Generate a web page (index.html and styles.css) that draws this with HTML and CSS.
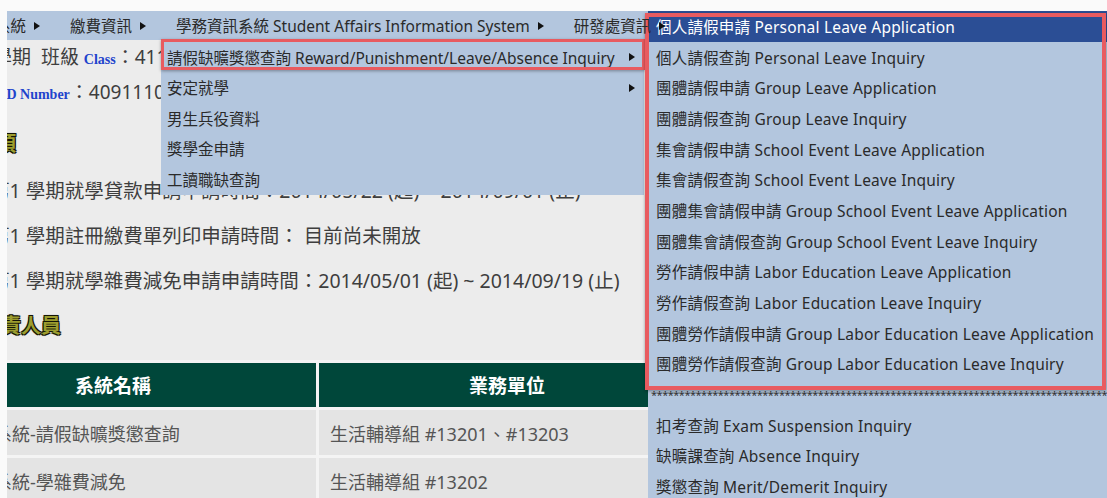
FILE: index.html
```html
<!DOCTYPE html>
<html lang="zh-Hant">
<head>
<meta charset="utf-8">
<title>學生資訊系統</title>
<link rel="stylesheet" href="styles.css">
</head>
<body>
<div class="page">
  <nav class="menubar">
    <div class="menu-item first"><span>學務系統</span><i class="tri"></i></div>
    <div class="menu-item"><span>繳費資訊</span><i class="tri"></i></div>
    <div class="menu-item open">
      <span>學務資訊系統 Student Affairs Information System</span><i class="tri"></i>
      <ul class="submenu">
        <li class="sub-item current">
          <span>請假缺曠獎懲查詢 Reward/Punishment/Leave/Absence Inquiry</span><i class="tri"></i>
          <span class="callout callout-row"></span>
          <ul class="flyout">
            <li class="fly-item active">個人請假申請 Personal Leave Application</li>
            <li class="fly-item">個人請假查詢 Personal Leave Inquiry</li>
            <li class="fly-item">團體請假申請 Group Leave Application</li>
            <li class="fly-item">團體請假查詢 Group Leave Inquiry</li>
            <li class="fly-item">集會請假申請 School Event Leave Application</li>
            <li class="fly-item">集會請假查詢 School Event Leave Inquiry</li>
            <li class="fly-item">團體集會請假申請 Group School Event Leave Application</li>
            <li class="fly-item">團體集會請假查詢 Group School Event Leave Inquiry</li>
            <li class="fly-item">勞作請假申請 Labor Education Leave Application</li>
            <li class="fly-item">勞作請假查詢 Labor Education Leave Inquiry</li>
            <li class="fly-item">團體勞作請假申請 Group Labor Education Leave Application</li>
            <li class="fly-item">團體勞作請假查詢 Group Labor Education Leave Inquiry</li>
            <li class="fly-item fly-sep">**************************************************************************************************</li>
            <li class="fly-item">扣考查詢 Exam Suspension Inquiry</li>
            <li class="fly-item">缺曠課查詢 Absence Inquiry</li>
            <li class="fly-item">獎懲查詢 Merit/Demerit Inquiry</li>
            <span class="callout callout-list"></span>
          </ul>
        </li>
        <li class="sub-item"><span>安定就學</span><i class="tri"></i></li>
        <li class="sub-item"><span>男生兵役資料</span></li>
        <li class="sub-item"><span>獎學金申請</span></li>
        <li class="sub-item"><span>工讀職缺查詢</span></li>
      </ul>
    </div>
    <div class="menu-item"><span>研發處資訊</span><i class="tri"></i></div>
  </nav>

  <main class="content">
    <p class="meta meta-class">學期&nbsp; 班級 <b class="tag">Class</b>：4110A</p>
    <p class="meta meta-id"><b class="tag">ID Number</b>：409111071</p>

    <h2 class="section-title title-notice">注意事項</h2>
    <p class="notice first-notice">第1 學期就學貸款申請申請時間：2014/05/22 (起) ~ 2014/09/01 (止)</p>
    <p class="notice">第1 學期註冊繳費單列印申請時間： 目前尚未開放</p>
    <p class="notice">第1 學期就學雜費減免申請申請時間：2014/05/01 (起) ~ 2014/09/19 (止)</p>

    <h2 class="section-title title-staff">負責人員</h2>
    <table class="contacts">
      <thead>
        <tr><th class="col-system">系統名稱</th><th class="col-unit">業務單位</th></tr>
      </thead>
      <tbody>
        <tr><td>學務資訊系統-請假缺曠獎懲查詢</td><td>生活輔導組 #13201、#13203</td></tr>
        <tr><td>學務資訊系統-學雜費減免</td><td>生活輔導組 #13202</td></tr>
      </tbody>
    </table>
  </main>
</div>
</body>
</html>
```

FILE: styles.css
```css
html, body {
  margin: 0;
  height: 100%;
  overflow: hidden;
}

body {
  background: #fafafa;
  font-family: "Noto Sans", "Noto Sans CJK TC", sans-serif;
  color: #2a2a2a;
}

ul {
  list-style: none;
  margin: 0;
  padding: 0;
}

.page {
  margin: 11px 0 0 7px;
  height: calc(100% - 11px);
  display: flex;
  flex-direction: column;
  overflow: hidden;
  position: relative;
}

/* ---------- top menu bar ---------- */
.menubar {
  display: flex;
  align-items: center;
  height: 29px;
  flex: none;
  background: #b3c6de;
  font-size: 15.5px;
  white-space: nowrap;
  margin-left: -58px;
  position: relative;
  z-index: 5;
}

.menu-item {
  display: flex;
  align-items: center;
  height: 100%;
  padding: 0 15px;
  position: relative;
}

.tri {
  display: inline-block;
  width: 0;
  height: 0;
  border-left: 6px solid #111;
  border-top: 4.5px solid transparent;
  border-bottom: 4.5px solid transparent;
  margin-left: 8px;
}

/* ---------- second level ---------- */
.submenu {
  position: absolute;
  top: 100%;
  left: 0;
  width: 483px;
  padding-top: 2px;
  background: #b3c6de;
}

.sub-item {
  height: 30.5px;
  display: flex;
  align-items: center;
  justify-content: space-between;
  padding: 0 9px 0 6px;
  position: relative;
}

/* ---------- third level ---------- */
.flyout {
  position: absolute;
  top: -31px;
  left: calc(100% + 4px);
  width: 470px;
  background: #b3c6de;
  letter-spacing: 0.2px;
}

.fly-item {
  height: 30.7px;
  display: flex;
  align-items: center;
  padding-left: 8px;
  white-space: nowrap;
}

.fly-item.active {
  background: #2b4e95;
  color: #fff;
}

.fly-sep {
  font-size: 11px;
  letter-spacing: -0.5px;
  color: #333;
  overflow: hidden;
  padding-left: 3px;
}

/* highlight frames */
.callout {
  position: absolute;
  box-sizing: border-box;
  border: 3px solid #e85b60;
  box-shadow: 0 1px 3px rgba(0, 0, 0, 0.35);
  pointer-events: none;
}

.callout-row {
  top: -3px;
  left: 0;
  width: 484px;
  height: 31px;
}

.callout-list {
  top: 2px;
  left: -3px;
  width: 461px;
  height: 377px;
  border-width: 4px;
}

/* ---------- page body ---------- */
.content {
  flex: 1;
  background: #ececec;
  padding-top: 1px;
  color: #3e3e3e;
  white-space: nowrap;
  overflow: hidden;
}

.meta {
  margin: 0;
  font-size: 19px;
  line-height: 33px;
}

.meta-class { margin-left: -14px; }
.meta-id { margin-left: -6px; }

.tag {
  font-family: "Liberation Serif", serif;
  font-size: 14px;
  color: #1f44cc;
}

.section-title {
  margin: 0;
  font-size: 20px;
  line-height: 30px;
  font-weight: 700;
  color: #9c9d2e;
  text-shadow: -1px -1px 0 #151505, 1px -1px 0 #151505, -1px 1px 0 #151505, 1px 1px 0 #151505, 0 0 2px #000;
}

.title-notice { margin: 18px 0 0 -71px; }
.title-staff { margin: 8.5px 0 0 -26px; }

.notice {
  margin: 0 0 0 -17px;
  font-size: 19.5px;
  line-height: 45px;
}

.first-notice { margin-top: 8.5px; }

/* ---------- contact table ---------- */
.contacts {
  margin: 19px 0 0 -100px;
  border-spacing: 3px;
  background: #f4f4f4;
}

.contacts th {
  height: 44px;
  padding: 0;
  background: #00473a;
  color: #fff;
  font-size: 19px;
  font-weight: 700;
  text-align: center;
}

.col-system { width: 406px; }
.col-unit { width: 376px; }

.contacts td {
  height: 45px;
  padding: 0 0 0 12px;
  background: #e4e4e4;
  color: #555;
  font-size: 18px;
}

.contacts td + td { padding-left: 11px; }
```
